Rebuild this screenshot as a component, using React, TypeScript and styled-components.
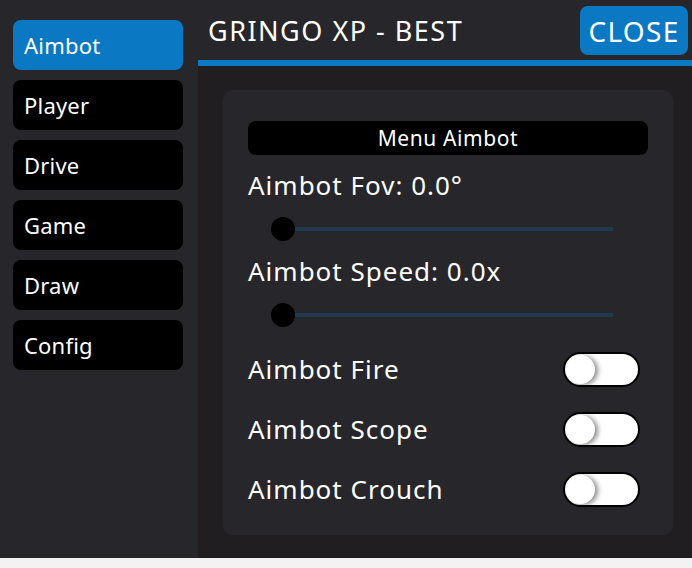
import React, { FC, useState } from 'react';
import styled, { createGlobalStyle } from 'styled-components';

const GlobalStyle = createGlobalStyle`
  html, body {
    margin: 0;
    padding: 0;
    background: #f2f2f2;
  }
  body {
    font-family: 'Noto Sans', 'Lato', sans-serif;
    color: #ffffff;
  }
`;

const Window = styled.div`
  display: flex;
  width: 692px;
  height: 558px;
  background: #27262b;
  overflow: hidden;
`;

const Sidebar = styled.div`
  display: flex;
  flex-direction: column;
  gap: 10px;
  width: 198px;
  padding: 20px 15px 0 13px;
  box-sizing: border-box;
  flex-shrink: 0;
`;

const TabButton = styled.div<{ $active?: boolean }>`
  display: flex;
  align-items: center;
  height: 50px;
  padding-left: 11px;
  border-radius: 8px;
  background: ${(p) => (p.$active ? '#0a78c2' : '#000000')};
  font-size: 22px;
  letter-spacing: 0.2px;
`;

const Main = styled.div`
  flex: 1;
  display: flex;
  flex-direction: column;
`;

const Header = styled.div`
  display: flex;
  align-items: center;
  justify-content: space-between;
  height: 66px;
  padding: 0 4px 0 10px;
  box-sizing: border-box;
  border-bottom: 6px solid #0a78c2;
`;

const Title = styled.div`
  font-size: 27px;
  letter-spacing: 1.5px;
`;

const CloseButton = styled.div`
  display: flex;
  align-items: center;
  justify-content: center;
  width: 108px;
  height: 49px;
  margin-top: 1px;
  border-radius: 8px;
  background: #0a78c2;
  font-size: 28px;
  letter-spacing: 1.3px;
`;

const Content = styled.div`
  flex: 1;
  background: #211e22;
  padding: 24px 19px 23px 25px;
`;

const Card = styled.div`
  height: 100%;
  box-sizing: border-box;
  background: #27262b;
  border-radius: 10px;
  padding: 31px 25px 0 25px;
  display: flex;
  flex-direction: column;
`;

const SectionTitle = styled.div`
  height: 34px;
  width: 400px;
  display: flex;
  align-items: center;
  justify-content: center;
  background: #000000;
  border-radius: 8px;
  font-size: 21px;
  letter-spacing: 0.6px;
`;

const Label = styled.div`
  font-size: 26px;
  letter-spacing: 1px;
  line-height: 32px;
`;

const Spacer = styled.div<{ $h: number }>`
  height: ${(p) => p.$h}px;
  flex-shrink: 0;
`;

const SliderRow = styled.div`
  position: relative;
  height: 40px;
  margin: 8px 0 0 23px;
  width: 342px;
`;

const Track = styled.div`
  position: absolute;
  left: 12px;
  right: 0;
  top: 18px;
  height: 4px;
  background: #1f3a50;
`;

const Thumb = styled.div`
  position: absolute;
  left: 0;
  top: 8px;
  width: 24px;
  height: 24px;
  border-radius: 50%;
  background: #000000;
`;

const ToggleRow = styled.div`
  display: flex;
  align-items: center;
  justify-content: space-between;
  height: 60px;
  width: 392px;
`;

const ToggleTrack = styled.div<{ $on?: boolean }>`
  position: relative;
  width: 77px;
  height: 35px;
  box-sizing: border-box;
  border-radius: 18px;
  border: 2px solid #000000;
  background: ${(p) => (p.$on ? '#0a78c2' : '#ffffff')};
  cursor: pointer;
`;

const ToggleKnob = styled.div<{ $on?: boolean }>`
  position: absolute;
  top: 1px;
  left: ${(p) => (p.$on ? '43px' : '1px')};
  width: 29px;
  height: 29px;
  border-radius: 50%;
  background: #ffffff;
  box-shadow: 3px 1px 5px rgba(0, 0, 0, 0.45);
`;

const tabs = ['Aimbot', 'Player', 'Drive', 'Game', 'Draw', 'Config'];

const Slider: FC<{ label: string }> = ({ label }) => (
  <>
    <Label>{label}</Label>
    <SliderRow>
      <Track />
      <Thumb />
    </SliderRow>
  </>
);

const Toggle: FC<{ label: string }> = ({ label }) => {
  const [on, setOn] = useState(false);
  return (
    <ToggleRow>
      <Label>{label}</Label>
      <ToggleTrack $on={on} onClick={() => setOn(!on)}>
        <ToggleKnob $on={on} />
      </ToggleTrack>
    </ToggleRow>
  );
};

const App: FC = () => (
  <>
    <GlobalStyle />
    <Window>
      <Sidebar>
        {tabs.map((t, i) => (
          <TabButton key={t} $active={i === 0}>
            {t}
          </TabButton>
        ))}
      </Sidebar>
      <Main>
        <Header>
          <Title>GRINGO XP - BEST</Title>
          <CloseButton>CLOSE</CloseButton>
        </Header>
        <Content>
          <Card>
            <SectionTitle>Menu Aimbot</SectionTitle>
            <Spacer $h={14} />
            <Slider label="Aimbot Fov: 0.0°" />
            <Spacer $h={6} />
            <Slider label="Aimbot Speed: 0.0x" />
            <Spacer $h={4} />
            <Toggle label="Aimbot Fire" />
            <Toggle label="Aimbot Scope" />
            <Toggle label="Aimbot Crouch" />
          </Card>
        </Content>
      </Main>
    </Window>
  </>
);

export default App;
